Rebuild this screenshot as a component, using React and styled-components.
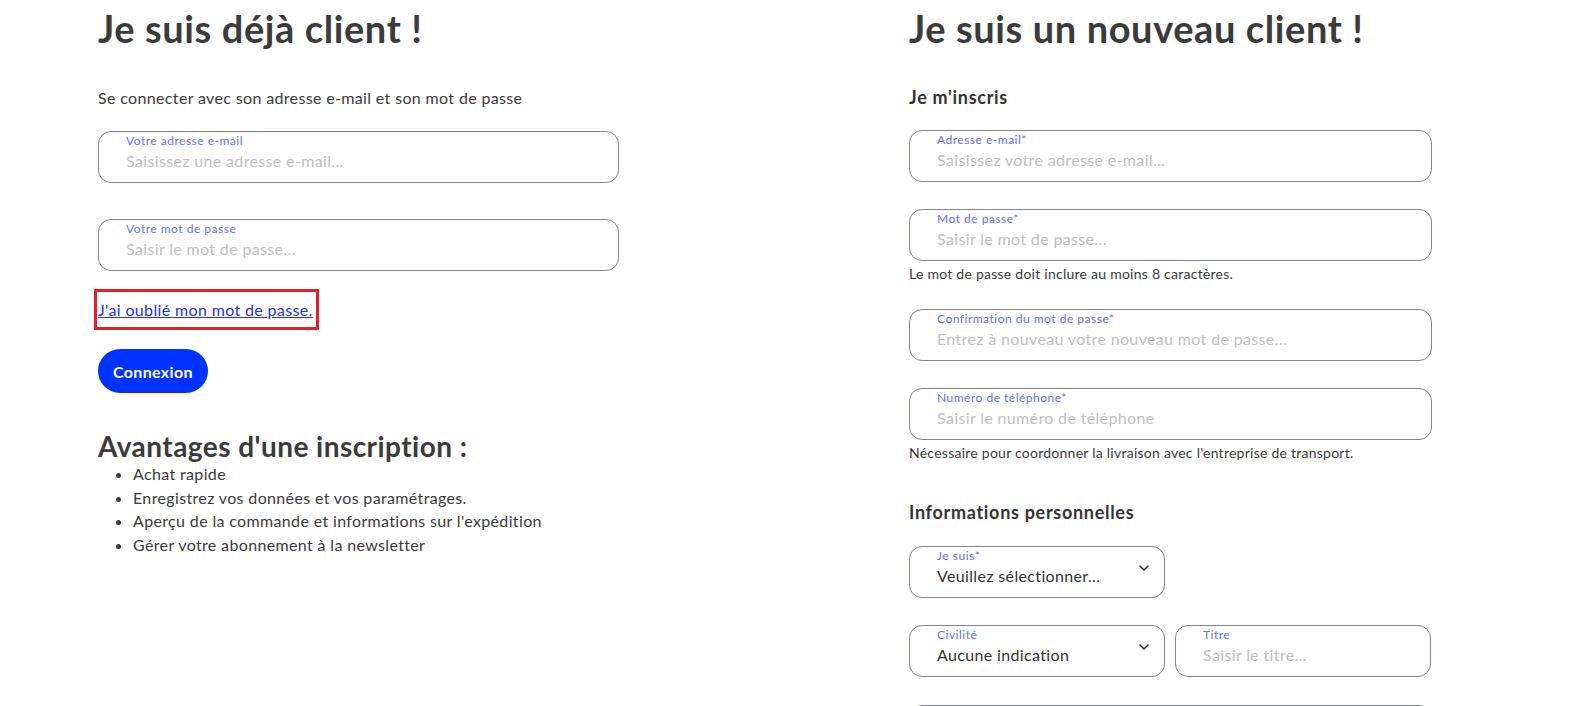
import React from "react";
import styled, { createGlobalStyle } from "styled-components";

const GlobalStyle = createGlobalStyle`
  html, body {
    margin: 0;
    padding: 0;
    background: #ffffff;
    font-family: Lato, "Open Sans", "Liberation Sans", sans-serif;
    color: #3a3a3a;
    letter-spacing: 0.35px;
  }
  * { box-sizing: border-box; }
`;

const Page = styled.div`
  display: grid;
  grid-template-columns: 521px 523px;
  column-gap: 290px;
  padding: 5px 0 0 98px;
  width: 1575px;
  height: 706px;
  overflow: hidden;
`;

const Column = styled.div`
  display: flex;
  flex-direction: column;
  align-items: flex-start;
`;

const Title = styled.h1`
  margin: 0;
  font-size: 38px;
  line-height: 46px;
  font-weight: 700;
  letter-spacing: 0.6px;
  color: #3b3b3b;
`;

const Intro = styled.p`
  margin: ${(p) => p.$top || 0}px 0 0;
  font-size: 16px;
  line-height: 20px;
`;

const SubHeading = styled.h3`
  margin: ${(p) => p.$top || 0}px 0 0;
  font-size: 18px;
  line-height: 24px;
  font-weight: 700;
  letter-spacing: 0.7px;
  color: #333;
`;

const Field = styled.label`
  display: flex;
  align-items: center;
  width: ${(p) => p.$width || "100%"};
  height: 52px;
  margin-top: ${(p) => p.$top || 0}px;
  padding: 0 ${(p) => (p.$select ? 12 : 22)}px 8px 27px;
  border: 1px solid #7d8594;
  border-radius: 13px;
  background: #fff;
`;

const FieldInner = styled.div`
  display: flex;
  flex-direction: column;
  flex: 1;
  min-width: 0;
`;

const FieldLabel = styled.span`
  font-size: 12px;
  line-height: 14px;
  letter-spacing: 0.5px;
  color: #5f70ff;
`;

const Input = styled.input`
  border: none;
  outline: none;
  padding: 0;
  margin-top: 2px;
  font-family: inherit;
  letter-spacing: inherit;
  font-size: 16px;
  line-height: 22px;
  color: #333;
  background: transparent;
  width: 100%;
  &::placeholder {
    color: #c0c0c0;
  }
`;

const Value = styled.span`
  margin-top: 2px;
  font-size: 16px;
  line-height: 22px;
  color: #333;
`;

const Hint = styled.p`
  margin: 4px 0 0;
  font-size: 14px;
  line-height: 18px;
  letter-spacing: 0.25px;
  color: #3a3a3a;
`;

const Row = styled.div`
  display: flex;
  gap: 10px;
  width: 100%;
  margin-top: ${(p) => p.$top || 0}px;
`;

const Marked = styled.div`
  margin: 18px 0 0 -4px;
  padding: 7px 3px 7px 1px;
  border: 3px solid #e3212b;
`;

const ForgotLink = styled.a`
  font-size: 16px;
  line-height: 21px;
  color: #1f2fff;
  text-decoration: underline;
  cursor: pointer;
`;

const Button = styled.button`
  margin-top: 19px;
  height: 44px;
  padding: 0 15px;
  border: none;
  border-radius: 22px;
  background: #0033ff;
  color: #fff;
  font-family: inherit;
  letter-spacing: inherit;
  font-size: 16px;
  font-weight: 700;
  cursor: pointer;
`;

const BenefitsTitle = styled.h2`
  margin: 37px 0 0;
  font-size: 28px;
  line-height: 32px;
  font-weight: 700;
  letter-spacing: 0.45px;
  color: #3b3b3b;
`;

const List = styled.ul`
  margin: 0;
  padding-left: 35px;
  font-size: 16px;
  line-height: 23.5px;
`;

const Chevron = () => (
  <svg width="16" height="16" viewBox="0 0 24 24" fill="none" stroke="#333" strokeWidth="2.4" strokeLinecap="round" strokeLinejoin="round">
    <path d="M6 9l6 6 6-6" />
  </svg>
);

const TextField = ({ label, placeholder, top, width }) => (
  <Field $top={top} $width={width}>
    <FieldInner>
      <FieldLabel>{label}</FieldLabel>
      <Input placeholder={placeholder} />
    </FieldInner>
  </Field>
);

const SelectField = ({ label, value, top, width }) => (
  <Field $top={top} $width={width} $select>
    <FieldInner>
      <FieldLabel>{label}</FieldLabel>
      <Value>{value}</Value>
    </FieldInner>
    <Chevron />
  </Field>
);

const App = () => {
  return (
    <>
      <GlobalStyle />
      <Page>
        <Column>
          <Title>Je suis déjà client !</Title>
          <Intro $top={37}>Se connecter avec son adresse e-mail et son mot de passe</Intro>
          <TextField top={23} label="Votre adresse e-mail" placeholder="Saisissez une adresse e-mail..." />
          <TextField top={36} label="Votre mot de passe" placeholder="Saisir le mot de passe..." />
          <Marked>
            <ForgotLink>J'ai oublié mon mot de passe.</ForgotLink>
          </Marked>
          <Button>Connexion</Button>
          <BenefitsTitle>Avantages d'une inscription :</BenefitsTitle>
          <List>
            <li>Achat rapide</li>
            <li>Enregistrez vos données et vos paramétrages.</li>
            <li>Aperçu de la commande et informations sur l'expédition</li>
            <li>Gérer votre abonnement à la newsletter</li>
          </List>
        </Column>
        <Column>
          <Title>Je suis un nouveau client !</Title>
          <SubHeading $top={34}>Je m'inscris</SubHeading>
          <TextField top={21} label="Adresse e-mail*" placeholder="Saisissez votre adresse e-mail..." />
          <TextField top={27} label="Mot de passe*" placeholder="Saisir le mot de passe..." />
          <Hint>Le mot de passe doit inclure au moins 8 caractères.</Hint>
          <TextField top={26} label="Confirmation du mot de passe*" placeholder="Entrez à nouveau votre nouveau mot de passe..." />
          <TextField top={27} label="Numéro de téléphone*" placeholder="Saisir le numéro de téléphone" />
          <Hint>Nécessaire pour coordonner la livraison avec l'entreprise de transport.</Hint>
          <SubHeading $top={38}>Informations personnelles</SubHeading>
          <SelectField top={22} width="256px" label="Je suis*" value="Veuillez sélectionner..." />
          <Row $top={27}>
            <SelectField width="256px" label="Civilité" value="Aucune indication" />
            <TextField width="256px" label="Titre" placeholder="Saisir le titre..." />
          </Row>
          <TextField top={28} label="" placeholder="" />
        </Column>
      </Page>
    </>
  );
};

export default App;
